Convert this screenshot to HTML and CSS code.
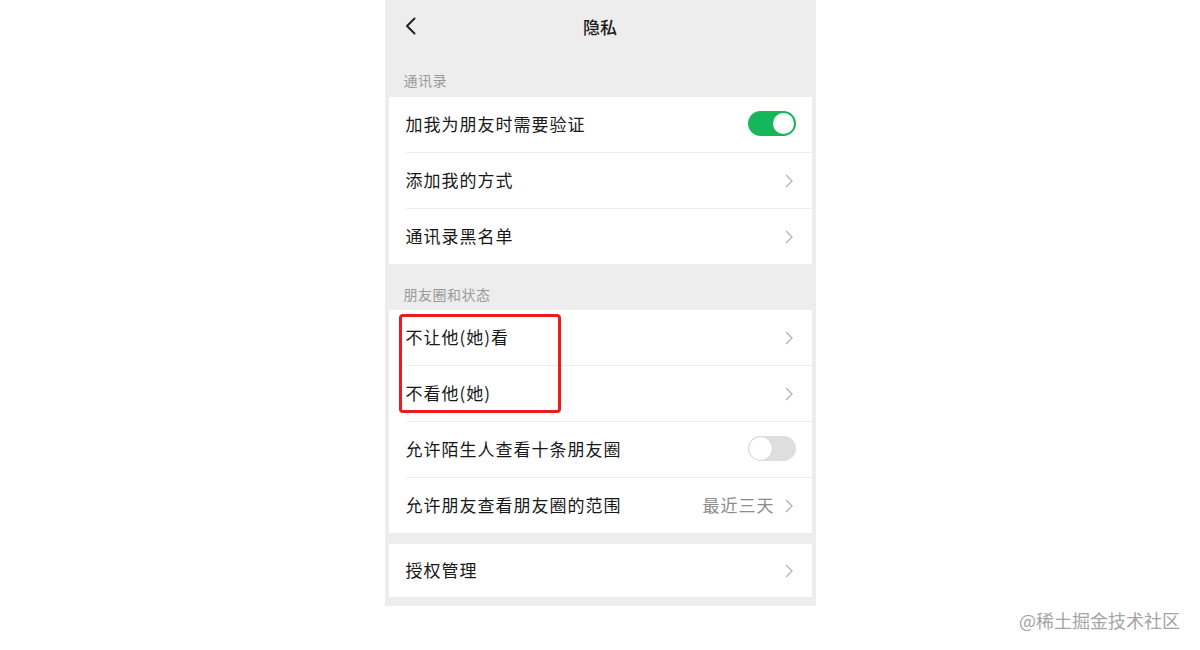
FILE: index.html
```html
<!DOCTYPE html>
<html lang="zh">
<head>
<meta charset="utf-8">
<title>隐私</title>
<link rel="stylesheet" href="styles.css">
</head>
<body>
<div class="page">
  <div class="phone">
    <div class="nav">
      <svg class="back" width="14" height="18" viewBox="0 0 14 18"><path d="M10.5 1.5 L3 9 L10.5 16.5" fill="none" stroke="#222" stroke-width="2" stroke-linecap="round" stroke-linejoin="round"/></svg>
      <div class="title">隐私</div>
    </div>
    <div class="section-head first">通讯录</div>
    <div class="card">
      <div class="row"><span class="label">加我为朋友时需要验证</span><span class="toggle on"><span class="knob"></span></span></div>
      <div class="sep"></div>
      <div class="row"><span class="label">添加我的方式</span><svg class="chev" width="9" height="14" viewBox="0 0 9 14"><path d="M1.5 1.5 L7 7 L1.5 12.5" fill="none" stroke="#b4b4b4" stroke-width="1.4" stroke-linecap="round" stroke-linejoin="round"/></svg></div>
      <div class="sep"></div>
      <div class="row"><span class="label">通讯录黑名单</span><svg class="chev" width="9" height="14" viewBox="0 0 9 14"><path d="M1.5 1.5 L7 7 L1.5 12.5" fill="none" stroke="#b4b4b4" stroke-width="1.4" stroke-linecap="round" stroke-linejoin="round"/></svg></div>
    </div>
    <div class="section-head">朋友圈和状态</div>
    <div class="card marked">
      <div class="highlight"></div>
      <div class="row"><span class="label">不让他(她)看</span><svg class="chev" width="9" height="14" viewBox="0 0 9 14"><path d="M1.5 1.5 L7 7 L1.5 12.5" fill="none" stroke="#b4b4b4" stroke-width="1.4" stroke-linecap="round" stroke-linejoin="round"/></svg></div>
      <div class="sep"></div>
      <div class="row"><span class="label">不看他(她)</span><svg class="chev" width="9" height="14" viewBox="0 0 9 14"><path d="M1.5 1.5 L7 7 L1.5 12.5" fill="none" stroke="#b4b4b4" stroke-width="1.4" stroke-linecap="round" stroke-linejoin="round"/></svg></div>
      <div class="sep"></div>
      <div class="row"><span class="label">允许陌生人查看十条朋友圈</span><span class="toggle off"><span class="knob"></span></span></div>
      <div class="sep"></div>
      <div class="row"><span class="label">允许朋友查看朋友圈的范围</span><span class="right"><span class="value">最近三天</span><svg class="chev" width="9" height="14" viewBox="0 0 9 14"><path d="M1.5 1.5 L7 7 L1.5 12.5" fill="none" stroke="#b4b4b4" stroke-width="1.4" stroke-linecap="round" stroke-linejoin="round"/></svg></span></div>
    </div>
    <div class="card last">
      <div class="row short"><span class="label">授权管理</span><svg class="chev" width="9" height="14" viewBox="0 0 9 14"><path d="M1.5 1.5 L7 7 L1.5 12.5" fill="none" stroke="#b4b4b4" stroke-width="1.4" stroke-linecap="round" stroke-linejoin="round"/></svg></div>
    </div>
  </div>
  <div class="watermark">@稀土掘金技术社区</div>
</div>
</body>
</html>
```
FILE: styles.css
```css
* { box-sizing: border-box; }
html, body { margin: 0; padding: 0; background: #ffffff; }
body {
  font-family: "Noto Sans CJK SC", "Noto Sans", "Liberation Sans", sans-serif;
  width: 1200px;
  height: 650px;
  overflow: hidden;
}
.page {
  position: relative;
  width: 1200px;
  height: 650px;
}
.phone {
  width: 431px;
  margin: 0 auto;
  background: #ededed;
  padding: 0 4px 9px;
}
.nav {
  height: 54px;
  display: flex;
  align-items: center;
  justify-content: center;
  position: relative;
}
.back {
  position: absolute;
  left: 15px;
  top: 17px;
}
.title {
  font-size: 17px;
  font-weight: 500;
  color: #1a1a1a;
  line-height: 20px;
  margin-top: -1px;
}
.section-head {
  height: 46px;
  display: flex;
  align-items: flex-end;
  padding: 0 0 8px 15px;
  font-size: 14px;
  line-height: 16px;
  color: #9a9a9a;
  letter-spacing: 0.5px;
}
.section-head.first { height: 43px; padding-bottom: 9px; }
.card {
  background: #ffffff;
  position: relative;
}
.card.last { margin-top: 11px; }
.row {
  height: 55px;
  display: flex;
  align-items: center;
  justify-content: space-between;
  padding: 0 18px 0 17px;
}
.row.short { height: 53px; }
.label {
  font-size: 17px;
  letter-spacing: 1px;
  color: #181818;
  line-height: 20px;
  margin-top: -2px;
}
.sep {
  height: 1px;
  background: #ececec;
  margin-left: 17px;
}
.right {
  display: flex;
  align-items: center;
  gap: 10px;
}
.value {
  font-size: 17px;
  letter-spacing: 1px;
  color: #8c8c8c;
  line-height: 20px;
  margin-top: -2px;
}
.chev { display: block; margin-right: 0; }
.toggle {
  width: 48px;
  height: 25px;
  border-radius: 13px;
  position: relative;
  margin-right: -2px;
  margin-top: -2px;
}
.toggle.on { background: #16b65a; }
.toggle.off { background: #dedede; }
.knob {
  position: absolute;
  top: 2px;
  width: 21px;
  height: 21px;
  border-radius: 50%;
  background: #ffffff;
}
.toggle.on .knob { right: 2px; }
.toggle.off .knob { left: 1px; top: 1px; width: 23px; height: 23px; box-shadow: 0 0 1px rgba(0,0,0,0.25); }
.highlight {
  position: absolute;
  left: 10px;
  top: 4px;
  width: 162px;
  height: 99px;
  border: 3px solid #ec1c1c;
  border-radius: 4px;
  pointer-events: none;
  z-index: 2;
}
.watermark {
  position: absolute;
  right: 20px;
  top: 608px;
  font-size: 18px;
  line-height: 24px;
  color: #a4a4a4;
  letter-spacing: 0;
}
```
